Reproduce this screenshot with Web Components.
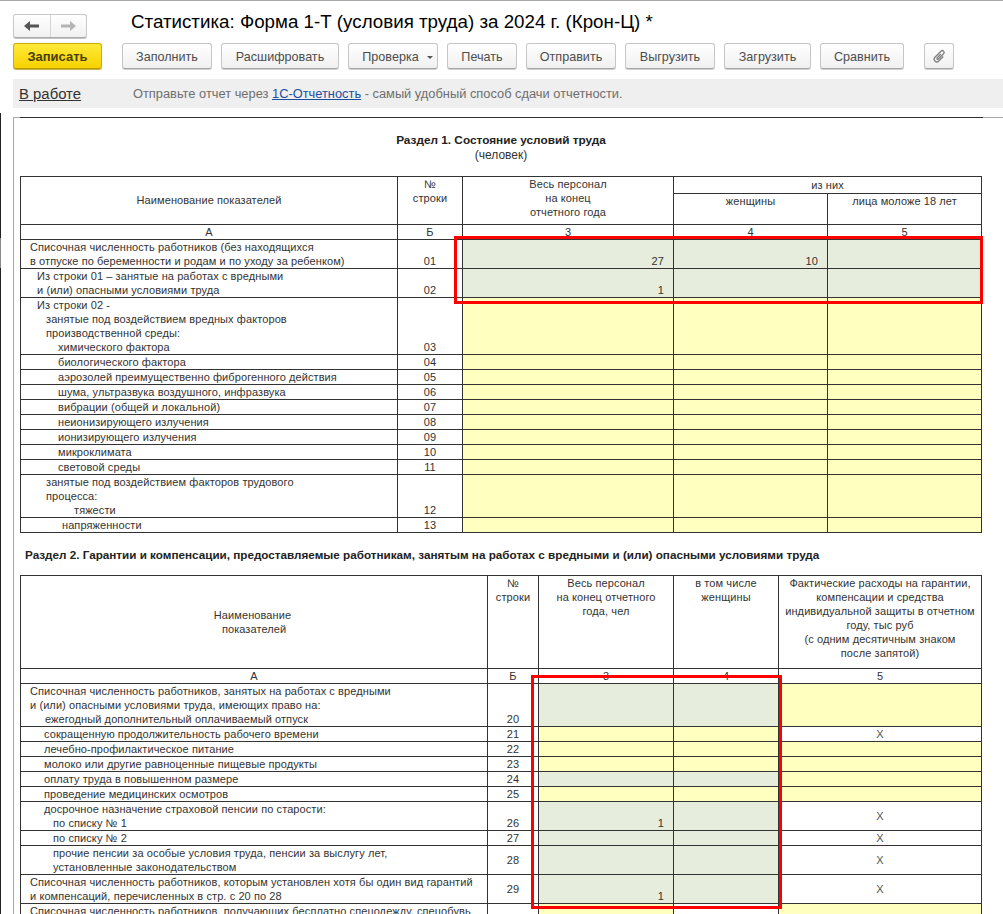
<!DOCTYPE html>
<html lang="ru">
<head>
<meta charset="utf-8">
<title>Статистика: Форма 1-Т</title>
<style>
  html, body { margin: 0; height: 914px; overflow: hidden; background: #fff; }
  body { font-family: "Liberation Sans", Arial, sans-serif; }
</style>
</head>
<body>
<form-window>
  <form-header slot="head" title-text="Статистика: Форма 1-Т (условия труда) за 2024 г. (Крон-Ц) *"></form-header>
  <form-toolbar slot="head">
    <tool-button kind="primary" style="width:89px">Записать</tool-button>
    <tool-button style="width:90px;margin-left:11px">Заполнить</tool-button>
    <tool-button style="width:118px">Расшифровать</tool-button>
    <tool-button kind="menu" style="width:90px">Проверка</tool-button>
    <tool-button style="width:70px">Печать</tool-button>
    <tool-button style="width:90px">Отправить</tool-button>
    <tool-button style="width:90px">Выгрузить</tool-button>
    <tool-button style="width:87px">Загрузить</tool-button>
    <tool-button style="width:84px">Сравнить</tool-button>
    <tool-button kind="clip" style="width:30px;margin-left:11px"></tool-button>
  </form-toolbar>
  <info-bar slot="head"></info-bar>
  <report-sheet>
    <section-one></section-one>
    <section-two></section-two>
  </report-sheet>
</form-window>

<script>
// общие стили таблиц отчета
const tableCss = `
  :host { display: block; color: #333; font: 11px/14px "Liberation Sans", Arial, sans-serif; letter-spacing: .09px; }
  .wrap { position: relative; width: 962px; margin-left: 6px; }
  table { border-collapse: collapse; table-layout: fixed; width: 962px; }
  td { border: 1px solid #333; padding: 0; text-align: center; vertical-align: top; overflow: hidden; white-space: nowrap; }
  td.lbl { text-align: left; vertical-align: bottom; }
  td.no { vertical-align: bottom; }
  td.mid { vertical-align: middle; }
  td.g { background: #e6eddc; }
  td.y { background: #ffffc0; }
  td.val { text-align: right; vertical-align: bottom; padding-right: 9px; }
  td.x { vertical-align: middle; color: #555; }
  .line { display: block; }
  .frame { position: absolute; box-sizing: border-box; border: 3px solid #f00; pointer-events: none; }
`;

function labelHtml(lines) {
  return lines.map(l => `<span class="line" style="padding-left:${l[0]}px">${l[1]}</span>`).join('');
}

// строка: высота, строки наименования, номер, ячейки
function rowHtml(r) {
  const cells = r.cells.map(c => {
    if (c === 'X') return `<td class="x">X</td>`;
    const [kind, val] = c.split(':');
    return `<td class="${kind}${val ? ' val' : ''}">${val || ''}</td>`;
  }).join('');
  return `<tr style="height:${r.h}px"><td class="lbl">${labelHtml(r.label)}</td><td class="no${r.mid ? ' mid' : ''}">${r.no}</td>${cells}</tr>`;
}

class FormWindow extends HTMLElement {
  constructor() {
    super();
    this.attachShadow({ mode: 'open' }).innerHTML = `
      <style>
        :host { display: flex; flex-direction: column; height: 914px; overflow: hidden; box-sizing: border-box; border-top: 1px solid #a8a8a8; }
        .main { flex: 1; min-height: 0; padding: 4px 0 0 1px; background: linear-gradient(#222 0 125px, #8a8a8a 125px 155px, #222 155px) left top / 1px 100% no-repeat; }
        .head { display: block; }
      </style>
      <div class="head"><slot name="head"></slot></div>
      <div class="main"><slot></slot></div>
    `;
  }
}

class FormHeader extends HTMLElement {
  constructor() {
    super();
    this.attachShadow({ mode: 'open' }).innerHTML = `
      <style>
        :host { display: flex; align-items: center; height: 42px; padding: 8px 0 0 13px; box-sizing: border-box; }
        .nav { display: flex; width: 74px; height: 24px; box-sizing: border-box; border: 1px solid #c9c9c9; border-bottom-color: #a9a9a9; border-radius: 3px; background: linear-gradient(#fff, #f1f1f1); box-shadow: 0 1px 0 #c4c4c4; }
        .nav span { display: flex; align-items: center; justify-content: center; flex: 1; }
        .nav span + span { border-left: 1px solid #d4d4d4; }
        h1 { margin: 0 0 0 44px; font: 400 18.75px/26px "Liberation Sans", Arial, sans-serif; color: #000; white-space: nowrap; position: relative; top: -4px; }
      </style>
      <div class="nav">
        <span><svg width="15" height="10" viewBox="0 0 15 10"><path d="M0 5 6 0V3.4H15V6.6H6V10Z" fill="#555"/></svg></span>
        <span><svg width="15" height="10" viewBox="0 0 15 10"><path d="M15 5 9 0V3.4H0V6.6H9V10Z" fill="#b4b4b4"/></svg></span>
      </div>
      <h1>${this.getAttribute('title-text')}</h1>
    `;
  }
}

class FormToolbar extends HTMLElement {
  constructor() {
    super();
    this.attachShadow({ mode: 'open' }).innerHTML = `
      <style>
        :host { display: flex; gap: 9px; height: 26px; margin: 0 0 10px 13px; }
      </style>
      <slot></slot>
    `;
  }
}

class ToolButton extends HTMLElement {
  constructor() {
    super();
    const kind = this.getAttribute('kind') || '';
    const extra = kind === 'menu'
      ? '<svg class="caret" width="6" height="3" viewBox="0 0 6 3"><path d="M0 0H6L3 3Z" fill="#555"/></svg>'
      : kind === 'clip'
        ? '<svg class="clip" width="15" height="15" viewBox="0 0 14 14"><path transform="rotate(45 7 7)" d="M9.5 4.5V10.5a2.5 2.5 0 0 1-5 0V2.5a1.7 1.7 0 0 1 3.4 0V9.5a.8.8 0 0 1-1.6 0V4.5" fill="none" stroke="#808080" stroke-width="1.2"/></svg>'
        : '';
    this.attachShadow({ mode: 'open' }).innerHTML = `
      <style>
        :host { display: flex; align-items: center; justify-content: center; gap: 8px; box-sizing: border-box; height: 26px; flex: none; padding-top: 2px;
          border: 1px solid #c6c6c6; border-bottom-color: #a6a6a6; border-radius: 3px;
          background: linear-gradient(#fff, #f0f0f0); box-shadow: 0 1px 0 #cfcfcf;
          font: 12.6px/16px "Liberation Sans", Arial, sans-serif; color: #4d4d4d; white-space: nowrap; }
        :host([kind="primary"]) { background: linear-gradient(#ffe93a, #f7d200); border-color: #cfad00; border-bottom-color: #b89a00; box-shadow: 0 1px 0 #c9b24d; color: #4a3f00; font-weight: 700; font-size: 13px; }
        :host([kind="menu"]) { padding-left: 9px; }
        :host([kind="clip"]) { padding-top: 0; }
        .caret { margin-top: 1px; }
      </style>
      <slot></slot>${extra}
    `;
  }
}

class InfoBar extends HTMLElement {
  constructor() {
    super();
    this.attachShadow({ mode: 'open' }).innerHTML = `
      <style>
        :host { display: flex; align-items: center; height: 29px; margin: 0 0 5px 13px; padding-left: 6px; background: #efefef; font-family: "Liberation Sans", Arial, sans-serif; white-space: nowrap; }
        .state { width: 114px; padding-top: 1px; font-size: 14.9px; color: #333; text-decoration: underline; }
        .hint { font-size: 12.85px; color: #6e6e6e; }
        a { color: #1c4ea0; text-decoration: underline; }
      </style>
      <span class="state">В работе</span>
      <span class="hint">Отправьте отчет через <a>1С-Отчетность</a> - самый удобный способ сдачи отчетности.</span>
    `;
  }
}

class ReportSheet extends HTMLElement {
  constructor() {
    super();
    this.attachShadow({ mode: 'open' }).innerHTML = `
      <style>
        :host { display: block; margin-left: 12px; padding-left: 1px; height: 806px; overflow: hidden;
          background:
            linear-gradient(#333, #333) 7px 0 / 963px 1px no-repeat,
            linear-gradient(#a8a8a8, #a8a8a8) 0 0 / 100% 1px no-repeat,
            linear-gradient(#a8a8a8, #a8a8a8) 0 0 / 1px 100% no-repeat; }
      </style>
      <slot></slot>
    `;
  }
}

class SectionOne extends HTMLElement {
  constructor() {
    super();
    const y = ['y', 'y', 'y'];
    const rows = [
      { h: 29, label: [[9, 'Списочная численность работников (без находящихся'], [9, 'в отпуске по беременности и родам и по уходу за ребенком)']], no: '01', cells: ['g:27', 'g:10', 'g'] },
      { h: 29, label: [[16, 'Из строки 01 – занятые на работах с вредными'], [16, 'и (или) опасными условиями труда']], no: '02', cells: ['g:1', 'g', 'g'] },
      { h: 57, label: [[16, 'Из строки 02 -'], [25, 'занятые под воздействием вредных факторов'], [25, 'производственной среды:'], [37, 'химического фактора']], no: '03', cells: y },
      { h: 15, label: [[37, 'биологического фактора']], no: '04', cells: y },
      { h: 15, label: [[37, 'аэрозолей преимущественно фиброгенного действия']], no: '05', cells: y },
      { h: 15, label: [[37, 'шума, ультразвука воздушного, инфразвука']], no: '06', cells: y },
      { h: 15, label: [[37, 'вибрации (общей и локальной)']], no: '07', cells: y },
      { h: 15, label: [[37, 'неионизирующего излучения']], no: '08', cells: y },
      { h: 15, label: [[37, 'ионизирующего излучения']], no: '09', cells: y },
      { h: 15, label: [[37, 'микроклимата']], no: '10', cells: y },
      { h: 15, label: [[37, 'световой среды']], no: '11', cells: y },
      { h: 43, label: [[25, 'занятые под воздействием факторов трудового'], [25, 'процесса:'], [53, 'тяжести']], no: '12', cells: y },
      { h: 15, label: [[41, 'напряженности']], no: '13', cells: y },
    ];
    this.attachShadow({ mode: 'open' }).innerHTML = `
      <style>${tableCss}
        .title { padding: 16px 0 13px; margin-left: 6px; width: 962px; text-align: center; letter-spacing: 0; }
        .title b { display: block; font-size: 11.8px; line-height: 15px; color: #222; }
        .title span { display: block; font-size: 12px; line-height: 15px; }
        .mid { vertical-align: middle; }
        td.name { padding-bottom: 2px; }
      </style>
      <div class="title"><b>Раздел 1. Состояние условий труда</b><span>(человек)</span></div>
      <div class="wrap">
        <table>
          <colgroup><col style="width:377px"><col style="width:65px"><col style="width:211px"><col style="width:154px"><col style="width:154px"></colgroup>
          <tr style="height:17px"><td rowspan="2" class="mid name">Наименование показателей</td><td rowspan="2">№<br>строки</td><td rowspan="2">Весь персонал<br>на конец<br>отчетного года</td><td colspan="2" class="mid">из них</td></tr>
          <tr style="height:31px"><td>женщины</td><td>лица моложе 18 лет</td></tr>
          <tr style="height:15px"><td>А</td><td>Б</td><td>3</td><td>4</td><td>5</td></tr>
          ${rows.map(rowHtml).join('')}
        </table>
        <div class="frame" style="left:434px;top:60px;width:529px;height:68px"></div>
      </div>
    `;
  }
}

class SectionTwo extends HTMLElement {
  constructor() {
    super();
    const rows = [
      { h: 43, label: [[9, 'Списочная численность работников, занятых на работах с вредными'], [9, 'и (или) опасными условиями труда, имеющих право на:'], [24, 'ежегодный дополнительный оплачиваемый отпуск']], no: '20', cells: ['g', 'g', 'y'] },
      { h: 15, label: [[23, 'сокращенную продолжительность рабочего времени']], no: '21', cells: ['y', 'y', 'X'] },
      { h: 15, label: [[23, 'лечебно-профилактическое питание']], no: '22', cells: ['y', 'y', 'y'] },
      { h: 15, label: [[23, 'молоко или другие равноценные пищевые продукты']], no: '23', cells: ['y', 'y', 'y'] },
      { h: 15, label: [[23, 'оплату труда в повышенном размере']], no: '24', cells: ['g', 'g', 'y'] },
      { h: 15, label: [[23, 'проведение медицинских осмотров']], no: '25', cells: ['y', 'y', 'y'] },
      { h: 29, label: [[23, 'досрочное назначение страховой пенсии по старости:'], [32, 'по списку № 1']], no: '26', cells: ['g:1', 'g', 'X'] },
      { h: 15, label: [[32, 'по списку № 2']], no: '27', cells: ['g', 'g', 'X'] },
      { h: 29, label: [[32, 'прочие пенсии за особые условия труда, пенсии за выслугу лет,'], [32, 'установленные законодательством']], no: '28', mid: true, cells: ['g', 'g', 'X'] },
      { h: 29, label: [[9, 'Списочная численность работников, которым установлен хотя бы один вид гарантий'], [9, 'и компенсаций, перечисленных в стр. с 20 по 28']], no: '29', mid: true, cells: ['g:1', 'g', 'X'] },
      { h: 29, label: [[9, 'Списочная численность работников, получающих бесплатно спецодежду, спецобувь']], no: '', cells: ['y', '', 'y'] },
    ];
    this.attachShadow({ mode: 'open' }).innerHTML = `
      <style>${tableCss}
        .title { margin: 15px 0 13px 11px; font-size: 11.7px; line-height: 14px; font-weight: 700; color: #222; white-space: nowrap; letter-spacing: 0; }
        .mid { vertical-align: middle; }
        td.name { padding-right: 3px; }
        tr:last-child td { vertical-align: top; }
      </style>
      <div class="title">Раздел 2. Гарантии и компенсации, предоставляемые работникам, занятым на работах с вредными и (или) опасными условиями труда</div>
      <div class="wrap">
        <table>
          <colgroup><col style="width:467px"><col style="width:51px"><col style="width:135px"><col style="width:105px"><col style="width:203px"></colgroup>
          <tr style="height:93px"><td class="mid name">Наименование<br>&nbsp;показателей</td><td>№<br>строки</td><td>Весь персонал<br>на конец отчетного<br>года, чел</td><td>в том числе<br>женщины</td><td>Фактические расходы на гарантии,<br>компенсации и средства<br>индивидуальной защиты в отчетном<br>году, тыс руб<br>(с одним десятичным знаком<br>после запятой)</td></tr>
          <tr style="height:15px"><td>А</td><td>Б</td><td>3</td><td>4</td><td>5</td></tr>
          ${rows.map(rowHtml).join('')}
        </table>
        <div class="frame" style="left:511px;top:100px;width:251px;height:234px"></div>
      </div>
    `;
  }
}

customElements.define('form-window', FormWindow);
customElements.define('form-header', FormHeader);
customElements.define('form-toolbar', FormToolbar);
customElements.define('tool-button', ToolButton);
customElements.define('info-bar', InfoBar);
customElements.define('report-sheet', ReportSheet);
customElements.define('section-one', SectionOne);
customElements.define('section-two', SectionTwo);
</script>
</body>
</html>
